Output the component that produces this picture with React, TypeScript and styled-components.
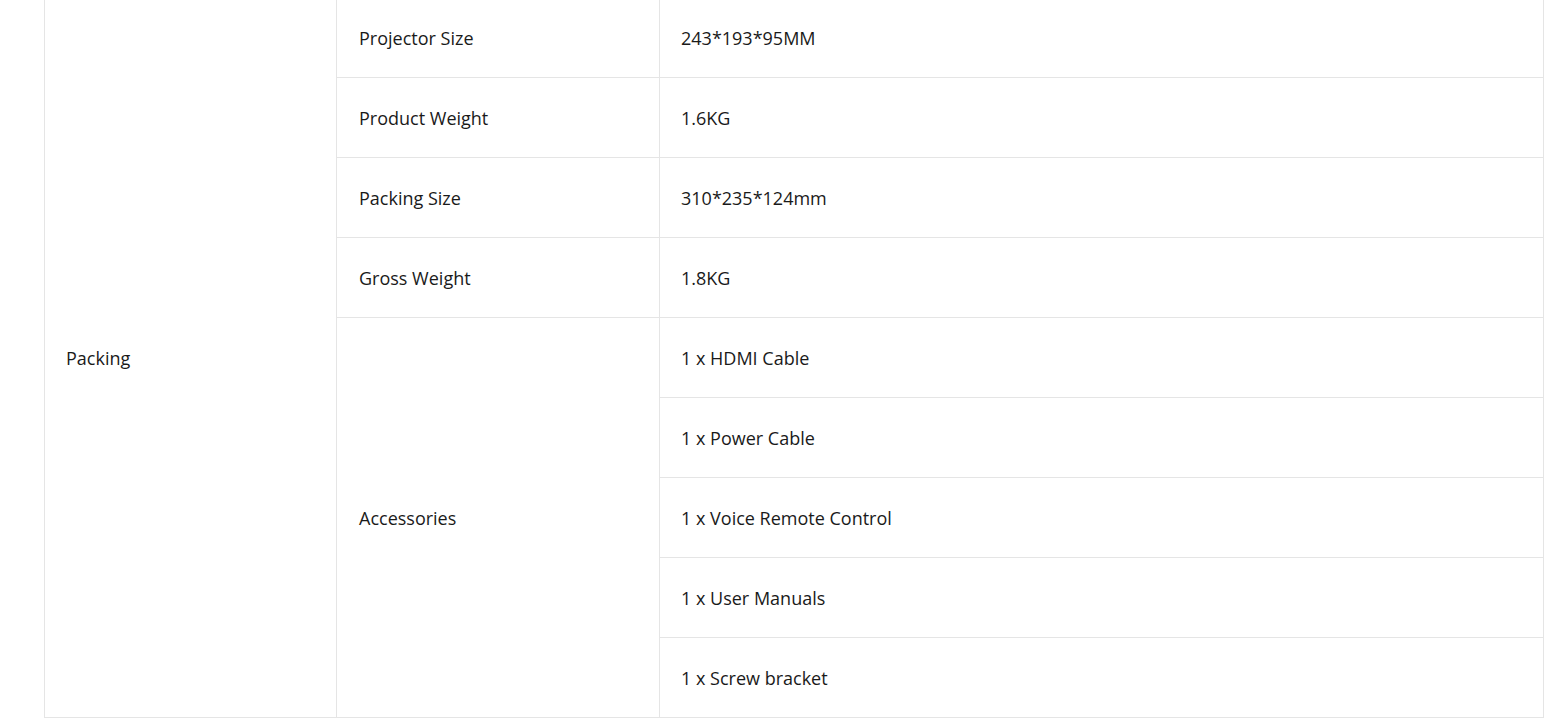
import React from "react";
import styled, { createGlobalStyle } from "styled-components";

const Global = createGlobalStyle`
  html, body { margin: 0; padding: 0; background: #fff; }
  body { font-family: "Open Sans", "Liberation Sans", sans-serif; color: #1a1a1a; overflow: hidden; }
`;

const Page = styled.div`
  padding-left: 44px;
  width: 1500px;
  margin-top: -3px;
`;

const Table = styled.table`
  width: 100%;
  border-collapse: collapse;
  table-layout: fixed;
`;

const Cell = styled.td<{ $pad?: number }>`
  border: 1px solid #e5e5e5;
  height: 80px;
  padding: 0 ${(p) => p.$pad ?? 21}px;
  font-size: 18px;
  line-height: 24px;
  vertical-align: middle;
  box-sizing: border-box;
`;

const rows = [
  ["Projector Size", "243*193*95MM"],
  ["Product Weight", "1.6KG"],
  ["Packing Size", "310*235*124mm"],
  ["Gross Weight", "1.8KG"],
];
const accessories = [
  "1 x HDMI Cable",
  "1 x Power Cable",
  "1 x Voice Remote Control",
  "1 x User Manuals",
  "1 x Screw bracket",
];

export default function App() {
  return (
    <>
      <Global />
      <Page>
        <Table>
          <colgroup>
            <col style={{ width: 292 }} />
            <col style={{ width: 323 }} />
            <col />
          </colgroup>
          <tbody>
            {rows.map(([k, v], i) => (
              <tr key={k}>
                {i === 0 && <Cell rowSpan={9}>Packing</Cell>}
                <Cell $pad={22}>{k}</Cell>
                <Cell>{v}</Cell>
              </tr>
            ))}
            {accessories.map((a, i) => (
              <tr key={a}>
                {i === 0 && (
                  <Cell $pad={22} rowSpan={5}>
                    Accessories
                  </Cell>
                )}
                <Cell>{a}</Cell>
              </tr>
            ))}
          </tbody>
        </Table>
      </Page>
    </>
  );
}
